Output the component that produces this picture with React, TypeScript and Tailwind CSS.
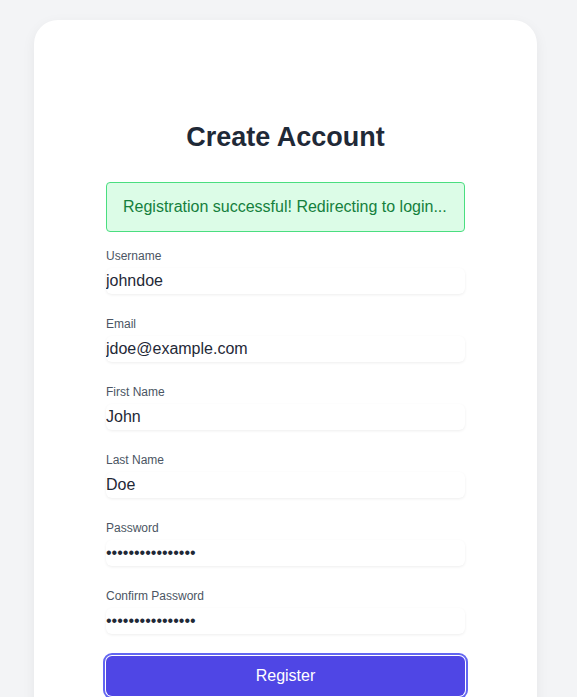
import { useState } from 'react';

const fields = [
    { id: 'username', label: 'Username', type: 'text', value: 'johndoe' },
    { id: 'email', label: 'Email', type: 'email', value: 'jdoe@example.com' },
    { id: 'firstName', label: 'First Name', type: 'text', value: 'John' },
    { id: 'lastName', label: 'Last Name', type: 'text', value: 'Doe' },
    { id: 'password', label: 'Password', type: 'password', value: 'supersecret12345' },
    { id: 'confirmPassword', label: 'Confirm Password', type: 'password', value: 'supersecret12345' },
];

export default function App() {
    const [values, setValues] = useState<Record<string, string>>(
        Object.fromEntries(fields.map((f) => [f.id, f.value]))
    );

    const onInput = (id: string) => (event) => {
        setValues({ ...values, [id]: event.currentTarget.value });
    };

    return (
        <div className="min-h-screen bg-[#f3f4f6] flex justify-center pt-5 pr-[6px] font-['Liberation_Sans',Arial,sans-serif]">
            <section className="w-[503px] bg-white rounded-3xl shadow-[0_4px_14px_rgba(0,0,0,0.06)] px-[72px] pt-[101px] pb-8 self-start">
                <h1 className="text-[27px] leading-8 font-bold text-[#1f2937] text-center mb-[29px]">Create Account</h1>
                <div className="bg-[#dcfce7] border border-[#4ade80] text-[#15803d] rounded px-4 py-3 mb-4 text-base leading-6">
                    Registration successful! Redirecting to login...
                </div>
                <form className="flex flex-col" onSubmit={(e) => e.preventDefault()}>
                    {fields.map((f) => (
                        <div key={f.id} className="mb-[22px] last:mb-[17px]">
                            <label htmlFor={f.id} className="block mb-1 text-xs leading-4 text-[#4b5563]">{f.label}</label>
                            <input
                                id={f.id}
                                type={f.type}
                                value={values[f.id]}
                                onInput={onInput(f.id)}
                                className="block w-full h-[26px] text-base leading-6 text-[#1f2937] bg-white rounded-md shadow-[0_1px_3px_rgba(0,0,0,0.07)] outline-none"
                            />
                        </div>
                    ))}
                    <button type="submit" className="w-full h-10 rounded-md bg-[#4f46e5] text-white text-base ring-2 ring-[#6366f1] ring-offset-1">
                        Register
                    </button>
                </form>
            </section>
        </div>
    );
}
